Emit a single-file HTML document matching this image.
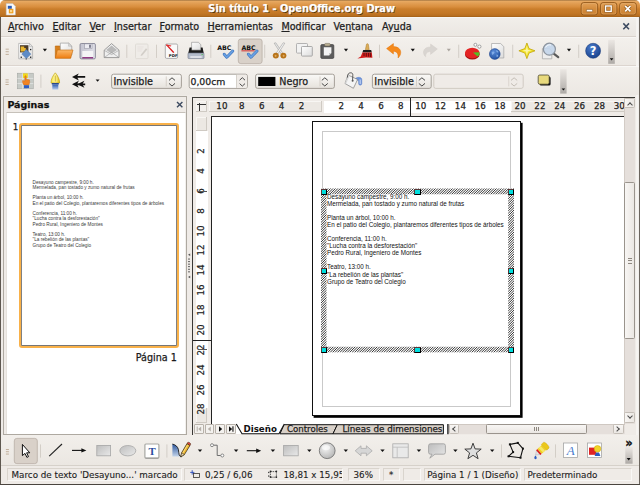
<!DOCTYPE html>
<html><head><meta charset="utf-8"><title>Sin título 1 - OpenOffice.org Draw</title>
<style>
*{box-sizing:border-box;margin:0;padding:0}
html,body{width:640px;height:486px;overflow:hidden;background:#fff}
body{position:relative;font-family:"DejaVu Sans","Liberation Sans",sans-serif;font-size:9.6px;color:#1a1a1a;line-height:1;-webkit-text-stroke-width:0.25px}
.a{position:absolute}
.t{position:absolute;white-space:nowrap;line-height:12px;height:12px}
u{text-decoration:underline;text-underline-offset:1px}
#title{left:0;top:0;width:640px;height:17px;background:linear-gradient(#8a6234 0px,#e9ab64 1px,#e29f55 3px,#d88d3c 7px,#ca7e2b 9px,#c47826 13px,#b66d1f 16px,#9c5c16 17px);border-radius:5px 5px 0 0}
#title .cap{left:0.7px;width:602px;top:2.8px;text-align:center;font-weight:bold;color:#fff;font-size:9.8px;text-shadow:0.8px 0.9px 0.6px #553408}
.wb{position:absolute;top:2.5px;width:16.5px;height:12.5px;border:1px solid #a9641b;border-radius:3px;background:linear-gradient(#e8aa66,#d28a3c);box-shadow:inset 0 0 0 1px rgba(255,220,170,.35)}
#menubar{left:1px;top:17px;width:635px;height:20px;background:linear-gradient(#fbfaf9 0,#f1eeea 1.5px,#ebe7e2 18px);border-bottom:1px solid #d9d2cc}
#menubar .t{top:4px;font-size:9.6px;color:#222}
#tb1{left:1px;top:37px;width:635px;height:29.1px;background:linear-gradient(#f3f0ec,#ece8e3);border-bottom:1px solid #dcd5cf;border-top:1px solid #f8f6f4}
#tb2{left:1px;top:66.1px;width:637.5px;height:29px;background:linear-gradient(#f3f0ec,#ece8e3);border-top:1px solid #f9f8f6}
.sep{position:absolute;width:1px;background:#cfcac2;box-shadow:1px 0 0 #fbfaf8}
.dd{position:absolute;width:0;height:0;border-left:2.5px solid transparent;border-right:2.5px solid transparent;border-top:3px solid #222}
.grip{position:absolute;width:3px;height:9px;background:repeating-linear-gradient(#b9b2a8 0,#b9b2a8 1px,transparent 1px,transparent 3px)}

#panel{left:3px;top:96px;width:184px;height:339px;border:1px solid #aea9a1;background:#efebe7}
#panel .hd{left:3.4px;top:2.4px;font-weight:bold;font-size:9.5px;color:#111}
#plist{left:2px;top:15.4px;width:180px;height:321.6px;background:#fff;border:1px solid #e6e2dd;border-top:1.3px solid #c6c1ba;border-bottom:none;border-right-color:#f2f0ed}
#thumb{left:19.2px;top:123.2px;width:160px;height:224.5px;border:2.4px solid #f9b149;border-radius:3px;background:#fff;box-shadow:inset 0 0 0 0.7px #4a4a4a}
.tt{position:absolute;left:32.5px;font-family:"Liberation Sans",sans-serif;font-size:4.7px;line-height:5.27px;white-space:nowrap;color:#3a3a3a;-webkit-text-stroke-width:0}
#view{left:192px;top:97px;width:443px;height:338px;background:#efebe7;border-left:1.5px solid #3a3835;border-top:1.5px solid #3a3835}
#canvas{left:210.7px;top:116.2px;width:414.3px;height:307.8px;background:#fff;border-left:1.5px solid #222;border-top:1.5px solid #222;overflow:hidden}
.rn{position:absolute;font-size:8.7px;line-height:12px;height:12px;width:20px;text-align:center;color:#222}
.vn{position:absolute;font-size:8.7px;line-height:12px;height:12px;width:20px;text-align:center;color:#222;transform:rotate(-90deg);transform-origin:center}
#page{left:312.2px;top:121.1px;width:209px;height:295.1px;background:#fff;border:1px solid #111;box-shadow:1.6px 1.8px 0 #000}
#margin{left:321.8px;top:131.3px;width:189.7px;height:275.9px;border:1px solid #c9c9c9}
.hatch{position:absolute;background:repeating-linear-gradient(135deg,#222 0,#222 0.8px,#fff 0.8px,#fff 2px)}
.h{position:absolute;width:6.3px;height:6.2px;margin:.15px 0 0 .15px;background:#00dede;border:0.9px solid;border-color:#5a3838 #000 #000 #5a3838}
.dt{position:absolute;left:327px;font-family:"Liberation Sans",sans-serif;font-size:6.3px;line-height:7.05px;white-space:nowrap;color:#111;-webkit-text-stroke-width:0}
.sbtn{position:absolute;background:linear-gradient(#f6f4f1,#e4e0da);border:1px solid #aaa59d;border-radius:2px}

.rg{position:absolute;background:#ece8e3;box-shadow:inset -1px -1px 0 #cfcac3,inset 1px 1px 0 #f8f6f3}
.rw{position:absolute;background:#fff}

#vsb{left:624px;top:98px;width:11px;height:326px;background:#e5dfdb;border-left:1px solid #d3ccc6}
#hsb{left:449px;top:424.2px;width:175.5px;height:10.2px;background:#e5dfdb;border-top:1px solid #cfc8c2}
.sb{position:absolute;border:1px solid #c4beb7;border-radius:1.5px;background:linear-gradient(90deg,#f8f6f4,#ebe7e3)}
.sbh{position:absolute;border:1px solid #c4beb7;border-radius:1.5px;background:linear-gradient(#f8f6f4,#ebe7e3)}
.chev{position:absolute;width:4px;height:4px;border-left:1.3px solid #4a4a4a;border-top:1.3px solid #4a4a4a}
#tabs{left:193.5px;top:424px;width:255px;height:10px;background:#efebe7}
.nb{position:absolute;top:424px;width:9.4px;height:9.6px;border-radius:1px;border:1px solid #b8b2aa;background:#f4f2ef}
#btb{left:1px;top:435px;width:638px;height:30.5px;background:linear-gradient(#f2efeb,#ebe7e2);border-bottom:1px solid #d6d1ca}
#status{left:1px;top:466px;width:638px;height:18px;background:#efebe7}
.sf{position:absolute;top:468.2px;height:12.9px;border:1px solid;border-color:#d9d4cd #f9f8f6 #f9f8f6 #d9d4cd;overflow:hidden}
.sf span{position:absolute;top:0.8px;left:3.5px;font-size:8.75px;line-height:10px;white-space:nowrap;color:#1c1c1c;-webkit-text-stroke-width:.12px}
#wl{left:0;top:17px;width:1.2px;height:468px;background:#5e5850}
#wr{left:638.6px;top:17px;width:1.4px;height:468px;background:#6b655e}
#wb{left:0;top:483.6px;width:640px;height:1.4px;background:#4a453f}
#wbb{left:0;top:485px;width:640px;height:1px;background:#fff}
text[fill="#1c1c1c"],text[fill="#222"]{stroke:#1c1c1c;stroke-width:.25px}
</style></head><body>
<div id="title" class="a"><div class="t cap">Sin título 1 - OpenOffice.org Draw</div>
<svg class="a" style="left:0;top:0" width="640" height="18" viewBox="0 0 640 18">
<defs><linearGradient id="gWb" x1="0" y1="0" x2="0" y2="1"><stop offset="0" stop-color="#e3a25a"/><stop offset="0.5" stop-color="#d48c3c"/><stop offset="1" stop-color="#c98032"/></linearGradient></defs>
<g stroke="#8e5516" stroke-width="0.9" fill="url(#gWb)"><rect x="581.2" y="2.6" width="16.4" height="12.3" rx="2.5"/><rect x="600.6" y="2.6" width="16.2" height="12.3" rx="2.5"/><rect x="619.7" y="2.6" width="16.6" height="12.3" rx="2.5"/></g>
<g stroke="#f0c088" stroke-opacity="0.5" stroke-width="0.7" fill="none"><rect x="582.1" y="3.5" width="14.6" height="10.5" rx="1.8"/><rect x="601.5" y="3.5" width="14.4" height="10.5" rx="1.8"/><rect x="620.6" y="3.5" width="14.8" height="10.5" rx="1.8"/></g>
<rect x="586.4" y="9.4" width="6.2" height="2.4" rx="0.6" fill="#fff" stroke="#7a4a14" stroke-width="0.5"/>
<rect x="605.6" y="6" width="5.6" height="5.4" fill="none" stroke="#7a4a14" stroke-width="2.3"/><rect x="605.6" y="6" width="5.6" height="5.4" fill="none" stroke="#fff" stroke-width="1.4"/>
<path d="M625.2 6L630.4 11.4M630.4 6L625.2 11.4" stroke="#7a4a14" stroke-width="2.8"/><path d="M625.2 6L630.4 11.4M630.4 6L625.2 11.4" stroke="#fff" stroke-width="1.8"/>
<path d="M6.2 3.6H12.8L15.4 6.2V15H6.2z" fill="#fafafa" stroke="#b8b8b8" stroke-width="0.5"/>
<rect x="7.8" y="5.8" width="4" height="3" fill="#2a5ab4"/>
<rect x="8.8" y="8.8" width="4.6" height="4.6" fill="#f0a020"/><rect x="10" y="10" width="2.2" height="2.2" fill="#fbd890"/>
</svg>
</div>
<div class="a" style="left:1px;top:17px;width:637.6px;height:467px;background:linear-gradient(90deg,#efebe7 0,#efebe7 634.5px,#f8f7f5 636px,#f1eeeb 637.6px)"></div>
<div id="menubar" class="a">
<span class="t" style="left:7px"><u>A</u>rchivo</span>
<span class="t" style="left:51.5px"><u>E</u>ditar</span>
<span class="t" style="left:88.5px"><u>V</u>er</span>
<span class="t" style="left:113px"><u>I</u>nsertar</span>
<span class="t" style="left:158.5px"><u>F</u>ormato</span>
<span class="t" style="left:206.5px"><u>H</u>erramientas</span>
<span class="t" style="left:280.4px"><u>M</u>odificar</span>
<span class="t" style="left:332.5px">Ve<u>n</u>tana</span>
<span class="t" style="left:381px">Ay<u>u</u>da</span>
</div>
<div id="tb1" class="a"></div>
<!--TB1S--><svg class="a" style="left:0;top:36px" width="640" height="30" viewBox="0 36 640 30">
<defs>
<linearGradient id="gOr" x1="0" y1="0" x2="0" y2="1"><stop offset="0" stop-color="#fbb868"/><stop offset="1" stop-color="#ee7d10"/></linearGradient>
<linearGradient id="gPg" x1="0" y1="0" x2="1" y2="1"><stop offset="0" stop-color="#ffffff"/><stop offset="1" stop-color="#dcdcdc"/></linearGradient>
<linearGradient id="gHd" x1="0" y1="0" x2="0" y2="1"><stop offset="0" stop-color="#ebe7e3"/><stop offset="1" stop-color="#aeaaa6"/></linearGradient>
<radialGradient id="gHelp" cx="0.4" cy="0.3" r="0.8"><stop offset="0" stop-color="#4a7ccc"/><stop offset="1" stop-color="#143c86"/></radialGradient>
<radialGradient id="gGlobe" cx="0.4" cy="0.3" r="0.8"><stop offset="0" stop-color="#5a8cd8"/><stop offset="1" stop-color="#1c4c9c"/></radialGradient>
<linearGradient id="gFl" x1="0" y1="0" x2="1" y2="0"><stop offset="0" stop-color="#c4c4d0"/><stop offset="1" stop-color="#dedee6"/></linearGradient>
</defs>
<!-- grip -->
<g fill="#bcaa94"><rect x="5.6" y="48.7" width="3.2" height="0.9"/><rect x="5.6" y="51.3" width="3.2" height="0.9"/><rect x="5.6" y="53.9" width="3.2" height="0.9"/></g>
<!-- new drawing -->
<path d="M18.7 43.4H29.5L32.6 46.6V58.8H18.7z" fill="url(#gPg)" stroke="#a9a9a9" stroke-width="0.7"/>
<path d="M29.5 43.4V46.6H32.6z" fill="#e8e8e8" stroke="#a9a9a9" stroke-width="0.5"/>
<rect x="20" y="45.2" width="8.4" height="7.2" fill="#4a3a28"/>
<path d="M20.6 46.6h3.6v1.4h1.6v3.4h-5.2z" fill="#e9b62e"/>
<path d="M26.3 49.6L30.8 54.1L26.3 58.6L21.8 54.1z" fill="#5f8cc6" stroke="#4a74ac" stroke-width="0.5"/>
<g fill="#222"><rect x="20.6" y="56.6" width="1.3" height="1.3"/><rect x="30" y="56.6" width="1.3" height="1.3"/><rect x="30" y="48.9" width="1.3" height="1.3"/><rect x="25.6" y="58.6" width="1.3" height="0.8"/></g>
<path d="M42.8 48.7h4.2l-2.1 2.8z" fill="#111"/>
<!-- open -->
<path d="M55.3 46H59.8L60.8 47.4H70.6V57.8H55.3z" fill="#d8801c" stroke="#b8640c" stroke-width="0.6"/>
<path d="M60.3 43.1H68.6L71.8 46.2V55H60.3z" fill="url(#gPg)" stroke="#9a9a9a" stroke-width="0.7"/>
<path d="M68.6 43.1V46.2H71.8z" fill="#dedede" stroke="#9a9a9a" stroke-width="0.4"/>
<path d="M57.4 50H73L70.6 58.3H55.3z" fill="url(#gOr)" stroke="#c86c0c" stroke-width="0.6"/>
<!-- save -->
<rect x="80" y="43.5" width="15.4" height="15.4" rx="1.3" fill="url(#gFl)" stroke="#6c6c80" stroke-width="0.7"/>
<rect x="84.6" y="43.9" width="7.4" height="4.8" fill="#ececf2" stroke="#8a8a98" stroke-width="0.5"/>
<rect x="89.3" y="44.7" width="1.4" height="3.1" fill="#55556a"/>
<rect x="82.3" y="51" width="10.8" height="6.3" fill="#f4f4f6"/>
<rect x="82.3" y="57.1" width="10.8" height="1.3" fill="#8a2c7c"/>
<!-- mail -->
<path d="M104.2 50.2L111.6 43.6L119 50.2V57.6H104.2z" fill="#efefef" stroke="#858585" stroke-width="0.8"/>
<path d="M106.2 50L111.6 45.6L117 50L111.6 53.6z" fill="#b9b9b9"/>
<path d="M104.4 57.4L111.6 52.4L118.8 57.4M104.4 50.4L111.6 54.6L118.8 50.4" fill="none" stroke="#9a9a9a" stroke-width="0.6"/>
<!-- seps -->
<g fill="#d3cec7"><rect x="126.3" y="44.7" width="1" height="13.2"/><rect x="156" y="44.7" width="1" height="13.2"/><rect x="210.3" y="44.7" width="1" height="13.2"/><rect x="264.2" y="44.7" width="1" height="13.2"/><rect x="379" y="44.7" width="1" height="13.2"/><rect x="458.2" y="44.7" width="1" height="13.2"/><rect x="512.2" y="44.7" width="1" height="13.2"/><rect x="578.2" y="44.7" width="1" height="13.2"/></g>
<!-- edit doc disabled -->
<rect x="135.5" y="44" width="12.5" height="14.6" rx="1" fill="#efece8" stroke="#dcd8d2" stroke-width="0.8"/>
<path d="M141 54.5L146 48.3L147.3 49.4L142.3 55.5L140.6 56z" fill="#d2cec8"/>
<g stroke="#e0dcd6" stroke-width="0.6"><path d="M137.5 47h6M137.5 49h5M137.5 51h4"/></g>
<!-- pdf -->
<rect x="165.3" y="44" width="12.3" height="14.4" rx="1.4" fill="#fafafa" stroke="#9c9c9c" stroke-width="0.8"/>
<path d="M165.9 45L167 44.6L174.4 52.2L173.2 53z" fill="#d81818"/>
<path d="M166 45.6L166.4 44.4L171.4 45.4L170.8 46.4z" fill="#e03030"/>
<text x="168.8" y="57.3" font-family="DejaVu Sans,sans-serif" font-weight="bold" font-size="3.9" fill="#111">PDF</text>
<!-- printer -->
<path d="M191.6 42.3H198.4L200.8 44.6V50H191.6z" fill="url(#gPg)" stroke="#8c8c8c" stroke-width="0.6"/>
<path d="M189.6 47.6H191.6V50.2H200.8V47.6H202.6L203.8 53.6H188.2z" fill="#1c1c1c"/>
<rect x="188" y="53" width="16" height="5.6" rx="0.8" fill="#b4bccb" stroke="#6c7486" stroke-width="0.6"/>
<rect x="190.3" y="56.2" width="11.4" height="1.6" fill="#e6e8ee"/>
<rect x="201.6" y="54" width="1.1" height="1.1" fill="#4ac04a"/>
<!-- ABC 1 -->
<text x="217.2" y="49.6" font-family="DejaVu Sans,sans-serif" font-weight="bold" font-size="6.3" fill="#111">ABC</text>
<path d="M224.2 54.2L226.8 57.2L232.8 51" fill="none" stroke="#3f74bc" stroke-width="2.9" stroke-linecap="round" stroke-linejoin="round"/>
<path d="M224.2 54.2L226.8 57.2L232.8 51" fill="none" stroke="#6aa2e4" stroke-width="1.7" stroke-linecap="round" stroke-linejoin="round"/>
<!-- pressed btn -->
<rect x="238.3" y="39" width="23.8" height="24.6" rx="2.5" fill="#d9d1c9" stroke="#b9afa6" stroke-width="0.8"/>
<text x="241.4" y="49.6" font-family="DejaVu Sans,sans-serif" font-weight="bold" font-size="6.3" fill="#111">ABC</text>
<rect x="241.4" y="50.4" width="13.2" height="0.9" fill="#d42020"/>
<path d="M248.4 54.2L251 57.2L257 51" fill="none" stroke="#3f74bc" stroke-width="2.9" stroke-linecap="round" stroke-linejoin="round"/>
<path d="M248.4 54.2L251 57.2L257 51" fill="none" stroke="#6aa2e4" stroke-width="1.7" stroke-linecap="round" stroke-linejoin="round"/>
<!-- scissors -->
<path d="M274.2 43.2L275.8 42.8L283.4 54L281.8 55z" fill="#e9e9e9" stroke="#8e8e8e" stroke-width="0.5"/>
<path d="M284.8 43.2L283.2 42.8L275.6 54L277.2 55z" fill="#f4f4f4" stroke="#8e8e8e" stroke-width="0.5"/>
<ellipse cx="275.8" cy="55.6" rx="3" ry="2.9" fill="#b8741a"/><ellipse cx="283.4" cy="55.6" rx="3" ry="2.9" fill="#b8741a"/>
<ellipse cx="275.6" cy="55.8" rx="1" ry="1.1" fill="#dcaa62"/><ellipse cx="283.6" cy="55.8" rx="1" ry="1.1" fill="#dcaa62"/>
<!-- copy -->
<rect x="296.5" y="43.5" width="11" height="9.6" rx="0.8" fill="#f2f2f2" stroke="#a2a2a2" stroke-width="0.8"/>
<rect x="301.5" y="46.5" width="10.8" height="9.6" rx="0.8" fill="url(#gPg)" stroke="#989898" stroke-width="0.8"/>
<!-- paste -->
<rect x="320.8" y="44.6" width="13" height="13.8" rx="1.2" fill="#5c5c5c" stroke="#3e3e3e" stroke-width="0.7"/>
<rect x="324.6" y="43.4" width="5.6" height="2.6" rx="1" fill="#b9ae92" stroke="#6c6450" stroke-width="0.5"/>
<path d="M323.8 47.2H331.4V53L329 55.4H323.8z" fill="#f4f4f4"/>
<path d="M331.4 53H329V55.4z" fill="#c9c9c9"/>
<path d="M343.9 48.7h4.2l-2.1 2.8z" fill="#111"/>
<!-- brush -->
<path d="M366.4 44.6C366.4 43.4 368.4 43.4 368.4 44.6L369.2 49.8H365.4z" fill="#dcae58" stroke="#a8782c" stroke-width="0.5"/>
<path d="M363.2 50H371.2L371.8 52.4H362.4z" fill="#1c1c1c"/>
<path d="M362.4 52.4H371.8L372.4 57.8L366 57.4L357.4 58.6L360.8 56.6z" fill="#d21c1c"/>
<path d="M364 53v3M366.3 53v3.6M368.6 53v3.6M370.6 53v4" stroke="#4c0c0c" stroke-width="0.8"/>
<!-- undo -->
<path d="M386.6 48.6L393.4 43.6V46.6C398.6 46.6 401.4 50 400.6 53.6C400.2 55.6 399.2 57 398 58C398.6 54.6 397.4 51.4 393.4 51.2V54z" fill="#f58a1c" stroke="#e07206" stroke-width="0.5" stroke-linejoin="round"/>
<path d="M410.7 48.7h4.2l-2.1 2.8z" fill="#111"/>
<!-- redo disabled -->
<path d="M437.4 49L430.6 44V47C425.4 47 423 50 423.6 53.2C424 55 424.6 56 425.6 56.8C425.6 53.8 426.8 51.6 430.6 51.6V54.4z" fill="#d9d5d1" stroke="#cfcbc6" stroke-width="0.4" stroke-linejoin="round"/>
<path d="M446.8 48.8h4l-2 2.8z" fill="#aba59f"/>
<!-- chart -->
<ellipse cx="472.3" cy="54.4" rx="7.3" ry="5.2" fill="#a81010"/>
<ellipse cx="472.3" cy="53" rx="7.3" ry="5.2" fill="#e42424"/>
<path d="M473 52.6L479.4 52.2C479.8 53.8 479.2 55.4 477.6 56.6z" fill="#52c024"/>
<circle cx="475.4" cy="44.8" r="1.5" fill="#fff" stroke="#8a8a8a" stroke-width="0.8"/>
<circle cx="479.4" cy="46.6" r="1.6" fill="#fff" stroke="#8a8a8a" stroke-width="0.8"/>
<!-- hyperlink -->
<path d="M491.6 43.5H500.6L503.8 46.6V58H491.6z" fill="url(#gPg)" stroke="#a4a4a4" stroke-width="0.7"/>
<circle cx="494.8" cy="54" r="5.4" fill="url(#gGlobe)" stroke="#1a3f86" stroke-width="0.5"/>
<path d="M491.6 52.4C492.6 51.2 493.8 51.4 494.6 52.4C494.2 53.6 493 54.4 492.2 55zM495.8 50.4C497 50.2 498.2 51.2 498.6 52.2L497 52.6zM496.4 54.6C497.4 54.4 498.4 55.2 498.2 56.4L496.6 57z" fill="#8ab4ec" opacity="0.85"/>
<!-- star -->
<path d="M526.9 43L529 48.6L535 50.8L529 53L526.9 58.6L524.8 53L518.9 50.8L524.8 48.6z" fill="#f3e32a" stroke="#c2a60a" stroke-width="0.8" stroke-linejoin="round"/>
<path d="M526.9 45.6L527.8 49.8L531.6 50.8L527.8 51.6L526.9 55.6L526 51.6L522.4 50.8L526 49.8z" fill="#fbf6a8"/>
<!-- magnifier -->
<path d="M542.4 48.6H549.4L551.8 51V58.8H542.4z" fill="#eeeeee" stroke="#a2a2a2" stroke-width="0.7"/>
<path d="M553.4 53.4L558.2 57.2" stroke="#5a5a5a" stroke-width="2.2" stroke-linecap="round"/>
<circle cx="549.4" cy="49.2" r="6" fill="#c4d6ea" fill-opacity="0.92" stroke="#8c949e" stroke-width="1.2"/>
<path d="M545.6 47.4C546.6 45.2 549 44.4 551 45" fill="none" stroke="#fff" stroke-width="1" opacity="0.8"/>
<path d="M566.9 48.7h4.2l-2.1 2.8z" fill="#111"/>
<!-- help -->
<circle cx="593.1" cy="50.8" r="7.5" fill="url(#gHelp)" stroke="#123474" stroke-width="0.5"/>
<text x="593.1" y="55" text-anchor="middle" font-family="DejaVu Sans,sans-serif" font-weight="bold" font-size="11.5" fill="#fff">?</text>
<!-- overflow handle -->
<rect x="608.2" y="39.8" width="6.6" height="24" fill="url(#gHd)"/>
<path d="M609.8 58.2h3.6l-1.8 2.2z" fill="#111"/>
</svg>
<!--TB1E-->
<div id="tb2" class="a"></div>
<!--TB2S--><svg class="a" style="left:0;top:66px" width="640" height="30" viewBox="0 66 640 30">
<defs>
<linearGradient id="gCb" x1="0" y1="0" x2="0" y2="1"><stop offset="0" stop-color="#faf9f7"/><stop offset="1" stop-color="#e6e2dc"/></linearGradient>
<linearGradient id="gNib" x1="0" y1="0" x2="1" y2="0"><stop offset="0" stop-color="#f6e648"/><stop offset="0.5" stop-color="#fff6a0"/><stop offset="1" stop-color="#e0c010"/></linearGradient>
<linearGradient id="gHold" x1="0" y1="0" x2="0" y2="1"><stop offset="0" stop-color="#2c5cb0"/><stop offset="1" stop-color="#b8ccec"/></linearGradient>
</defs>
<g fill="#bcaa94"><rect x="5.5" y="79.4" width="3.2" height="0.9"/><rect x="5.5" y="81.7" width="3.2" height="0.9"/><rect x="5.5" y="84" width="3.2" height="0.9"/></g>
<!-- grid icon -->
<rect x="17.3" y="73.2" width="16" height="15.6" fill="#c6cac6" stroke="#9ea29e" stroke-width="0.5"/>
<g stroke="#e9ebe9" stroke-width="0.7"><path d="M22.6 73.2v15.6M28 73.2v15.6M17.3 78.4h16M17.3 83.6h16"/></g>
<rect x="23" y="73.4" width="4.8" height="4.6" fill="#f2d81c"/>
<path d="M24.8 76.4C24.8 75.4 26.2 75.4 26.2 76.4V79.2L29.4 79.8C30 81.6 29.6 84 28.6 85H24C22.8 83.8 22.2 82 22.6 80.4L24.8 81z" fill="#f08424" stroke="#c8600c" stroke-width="0.4"/>
<rect x="24" y="85.2" width="5" height="3" fill="#2e5cc0"/>
<rect x="40.4" y="74.6" width="1" height="13.2" fill="#d3cec7"/>
<!-- pen -->
<path d="M55.3 72.8C57.4 75.2 59.8 79.4 59.6 83H51C50.8 79.4 53.2 75.2 55.3 72.8z" fill="url(#gNib)" stroke="#b89a08" stroke-width="0.6"/>
<path d="M55.3 75.6V81.6" stroke="#a88c08" stroke-width="0.6"/>
<rect x="51.8" y="83" width="7" height="1.5" fill="#28488c"/>
<path d="M52.3 84.5H58.3V89.6H52.3z" fill="url(#gHold)"/>
<!-- arrows -->
<g fill="#111"><path d="M72 76.9L78.8 73.4L77.4 76H85.2V77.8H77.4L78.8 80.4z"/><path d="M72 84.3L78.8 80.8L77.4 83.4H85.2V85.2H77.4L78.8 87.8z"/><path d="M77.2 84.3L84.4 80.8L82.4 84.3L84.4 87.8z"/></g>
<path d="M95.6 79.5h4l-2 2.3z" fill="#111"/>
<!-- combo 1 -->
<rect x="111.6" y="74.2" width="69.8" height="14.2" rx="2" fill="url(#gCb)" stroke="#9c968e" stroke-width="0.9"/>
<rect x="165.8" y="76.4" width="0.8" height="10" fill="#cfc9c1"/>
<g fill="none" stroke="#484848" stroke-width="1"><path d="M169 80.4L172 77.8L175 80.4M169 83.4L172 86L175 83.4"/></g>
<text x="113.4" y="84.7" font-family="DejaVu Sans,sans-serif" font-size="9.6" fill="#1c1c1c">Invisible</text>
<!-- spin -->
<rect x="189.2" y="74.2" width="58.2" height="14.2" rx="2" fill="#fff" stroke="#9c968e" stroke-width="0.9"/>
<path d="M236.6 74.7H245.4Q246.9 74.7 246.9 76.2V86.4Q246.9 87.9 245.4 87.9H236.6z" fill="#efebe7"/>
<rect x="236.2" y="74.7" width="0.7" height="13.2" fill="#c6c0b8"/>
<g fill="none" stroke="#484848" stroke-width="1"><path d="M239.6 80.2L242.3 77.7L245 80.2M239.6 83.6L242.3 86.1L245 83.6"/></g>
<text x="190.5" y="84.7" font-family="DejaVu Sans,sans-serif" font-size="9.3" fill="#1c1c1c">0,00cm</text>
<!-- color combo -->
<rect x="255.6" y="74.2" width="78.8" height="14.2" rx="2" fill="url(#gCb)" stroke="#9c968e" stroke-width="0.9"/>
<rect x="258.2" y="76.9" width="17.2" height="9.1" fill="#000"/>
<text x="279.3" y="84.7" font-family="DejaVu Sans,sans-serif" font-size="9.6" fill="#1c1c1c">Negro</text>
<rect x="319.6" y="76.4" width="0.8" height="10" fill="#cfc9c1"/>
<g fill="none" stroke="#484848" stroke-width="1"><path d="M321.8 80.4L324.8 77.8L327.8 80.4M321.8 83.4L324.8 86L327.8 83.4"/></g>
<!-- bucket -->
<path d="M355.6 78.2C358 76.8 361.8 77 361.8 79.6V83.8C361.8 85.6 358.6 85.6 358.6 83.8V80.8C358 80 357 80 356.2 80.4z" fill="#6c92da" stroke="#4a72c0" stroke-width="0.4"/>
<path d="M359.6 79.4C360.4 79.2 360.8 79.6 360.8 80.4V83.6C360.8 84.4 359.6 84.4 359.6 83.6z" fill="#c0d2f2"/>
<path d="M348 75L357.6 79.5L353.4 88.3L345 83.5z" fill="#f4f4f4" stroke="#7c7c7c" stroke-width="0.7" stroke-linejoin="round"/>
<path d="M348 75L349.6 75.8L346.2 83.6L345 83.5z" fill="#d6d6d6"/>
<path d="M347.4 77.6C347.2 74.6 348.6 72.8 350.6 72.8C352.4 72.8 352.9 73.8 352.8 75.4L352.6 80.4" fill="none" stroke="#484848" stroke-width="0.9"/>
<circle cx="352.6" cy="80.8" r="1" fill="#555"/>
<!-- combo 3 -->
<rect x="372.4" y="74.2" width="58.8" height="14.2" rx="2" fill="url(#gCb)" stroke="#9c968e" stroke-width="0.9"/>
<text x="374.3" y="84.7" font-family="DejaVu Sans,sans-serif" font-size="9.6" fill="#1c1c1c">Invisible</text>
<rect x="416" y="76.4" width="0.8" height="10" fill="#cfc9c1"/>
<g fill="none" stroke="#484848" stroke-width="1"><path d="M418.8 80.4L421.9 77.8L425 80.4M418.8 83.4L421.9 86L425 83.4"/></g>
<!-- disabled combo -->
<rect x="433.8" y="74.2" width="89.4" height="14.2" rx="2" fill="#efebe7" stroke="#cdc7bf" stroke-width="0.9"/>
<rect x="508.4" y="76.4" width="0.8" height="10" fill="#d6d0c8"/>
<g fill="none" stroke="#c4beb6" stroke-width="1"><path d="M511 80.4L514.1 77.8L517.2 80.4M511 83.4L514.1 86L517.2 83.4"/></g>
<!-- shadow icon -->
<rect x="539.6" y="76.4" width="11" height="9.2" rx="1.6" fill="#111"/>
<rect x="538.2" y="75" width="11" height="9.2" rx="1.6" fill="#e8d97c" stroke="#4a4632" stroke-width="0.8"/>
<!-- overflow -->
<rect x="560.2" y="69.2" width="6.4" height="24.4" fill="url(#gHd)"/>
<path d="M561.6 88.4h3.6l-1.8 2.2z" fill="#111"/>
</svg>
<!--TB2E-->

<div id="panel" class="a"><span class="t hd">Páginas</span><div id="plist" class="a"></div></div>
<div class="t" style="left:12.8px;top:120.8px;font-size:8.8px">1</div>
<div id="thumb" class="a"></div>
<div class="tt" style="top:179.5px">Desayuno campestre, 9:00 h.<br>Mermelada, pan tostado y zumo natural de frutas<br><br>Planta un árbol, 10:00 h.<br>En el patio del Colegio, plantaremos diferentes tipos de árboles<br><br>Conferencia, 11:00 h.<br>"Lucha contra la desforestación"<br>Pedro Rural, Ingeniero de Montes<br><br>Teatro, 13:00 h.<br>"La rebelión de las plantas"<br>Grupo de Teatro del Colegio</div>
<div class="t" style="left:135.7px;top:352.3px;font-size:9.6px">Página 1</div>
<svg class="a" style="left:170px;top:98px" width="470" height="14" viewBox="170 98 470 14"><path d="M177 102L182.4 107.2M182.4 102L177 107.2" stroke="#3c4a60" stroke-width="1.4"/></svg>
<svg class="a" style="left:616px;top:20px" width="20" height="14" viewBox="616 20 20 14"><path d="M623.3 23.4L629 29.2M629 23.4L623.3 29.2" stroke="#3c4a60" stroke-width="1.5"/></svg>
<svg class="a" style="left:186px;top:250px" width="8" height="32" viewBox="186 250 8 32"><g fill="#555"><path d="M190.2 253.4V256L188 254.7z"/><path d="M190.2 275.7V278.3L188 277z"/><rect x="188" y="258.6" width="2" height="0.9"/><rect x="188" y="261.2" width="2" height="0.9"/><rect x="188" y="263.7" width="2" height="0.9"/><rect x="188" y="266.2" width="2" height="0.9"/><rect x="188" y="268.8" width="2" height="0.9"/><rect x="188" y="271.4" width="2" height="0.9"/></g></svg>
<div id="view" class="a"></div>
<div id="canvas" class="a"></div>
<div id="page" class="a"></div>
<div id="margin" class="a"></div>
<svg class="a" style="left:316px;top:184px" width="204" height="174" viewBox="316 184 204 174">
<defs><clipPath id="ring"><path clip-rule="evenodd" d="M321.0 188.3H514.0V352.6H321.0zM326.5 194.2H508.2V346.8H326.5z"/></clipPath></defs>
<g clip-path="url(#ring)"><rect x="316" y="184" width="204" height="174" fill="#fff"/><path d="M156.70 352.60L321.00 188.30M159.14 352.60L323.44 188.30M161.58 352.60L325.88 188.30M164.02 352.60L328.32 188.30M166.46 352.60L330.76 188.30M168.90 352.60L333.20 188.30M171.34 352.60L335.64 188.30M173.78 352.60L338.08 188.30M176.22 352.60L340.52 188.30M178.66 352.60L342.96 188.30M181.10 352.60L345.40 188.30M183.54 352.60L347.84 188.30M185.98 352.60L350.28 188.30M188.42 352.60L352.72 188.30M190.86 352.60L355.16 188.30M193.30 352.60L357.60 188.30M195.74 352.60L360.04 188.30M198.18 352.60L362.48 188.30M200.62 352.60L364.92 188.30M203.06 352.60L367.36 188.30M205.50 352.60L369.80 188.30M207.94 352.60L372.24 188.30M210.38 352.60L374.68 188.30M212.82 352.60L377.12 188.30M215.26 352.60L379.56 188.30M217.70 352.60L382.00 188.30M220.14 352.60L384.44 188.30M222.58 352.60L386.88 188.30M225.02 352.60L389.32 188.30M227.46 352.60L391.76 188.30M229.90 352.60L394.20 188.30M232.34 352.60L396.64 188.30M234.78 352.60L399.08 188.30M237.22 352.60L401.52 188.30M239.66 352.60L403.96 188.30M242.10 352.60L406.40 188.30M244.54 352.60L408.84 188.30M246.98 352.60L411.28 188.30M249.42 352.60L413.72 188.30M251.86 352.60L416.16 188.30M254.30 352.60L418.60 188.30M256.74 352.60L421.04 188.30M259.18 352.60L423.48 188.30M261.62 352.60L425.92 188.30M264.06 352.60L428.36 188.30M266.50 352.60L430.80 188.30M268.94 352.60L433.24 188.30M271.38 352.60L435.68 188.30M273.82 352.60L438.12 188.30M276.26 352.60L440.56 188.30M278.70 352.60L443.00 188.30M281.14 352.60L445.44 188.30M283.58 352.60L447.88 188.30M286.02 352.60L450.32 188.30M288.46 352.60L452.76 188.30M290.90 352.60L455.20 188.30M293.34 352.60L457.64 188.30M295.78 352.60L460.08 188.30M298.22 352.60L462.52 188.30M300.66 352.60L464.96 188.30M303.10 352.60L467.40 188.30M305.54 352.60L469.84 188.30M307.98 352.60L472.28 188.30M310.42 352.60L474.72 188.30M312.86 352.60L477.16 188.30M315.30 352.60L479.60 188.30M317.74 352.60L482.04 188.30M320.18 352.60L484.48 188.30M322.62 352.60L486.92 188.30M325.06 352.60L489.36 188.30M327.50 352.60L491.80 188.30M329.94 352.60L494.24 188.30M332.38 352.60L496.68 188.30M334.82 352.60L499.12 188.30M337.26 352.60L501.56 188.30M339.70 352.60L504.00 188.30M342.14 352.60L506.44 188.30M344.58 352.60L508.88 188.30M347.02 352.60L511.32 188.30M349.46 352.60L513.76 188.30M351.90 352.60L516.20 188.30M354.34 352.60L518.64 188.30M356.78 352.60L521.08 188.30M359.22 352.60L523.52 188.30M361.66 352.60L525.96 188.30M364.10 352.60L528.40 188.30M366.54 352.60L530.84 188.30M368.98 352.60L533.28 188.30M371.42 352.60L535.72 188.30M373.86 352.60L538.16 188.30M376.30 352.60L540.60 188.30M378.74 352.60L543.04 188.30M381.18 352.60L545.48 188.30M383.62 352.60L547.92 188.30M386.06 352.60L550.36 188.30M388.50 352.60L552.80 188.30M390.94 352.60L555.24 188.30M393.38 352.60L557.68 188.30M395.82 352.60L560.12 188.30M398.26 352.60L562.56 188.30M400.70 352.60L565.00 188.30M403.14 352.60L567.44 188.30M405.58 352.60L569.88 188.30M408.02 352.60L572.32 188.30M410.46 352.60L574.76 188.30M412.90 352.60L577.20 188.30M415.34 352.60L579.64 188.30M417.78 352.60L582.08 188.30M420.22 352.60L584.52 188.30M422.66 352.60L586.96 188.30M425.10 352.60L589.40 188.30M427.54 352.60L591.84 188.30M429.98 352.60L594.28 188.30M432.42 352.60L596.72 188.30M434.86 352.60L599.16 188.30M437.30 352.60L601.60 188.30M439.74 352.60L604.04 188.30M442.18 352.60L606.48 188.30M444.62 352.60L608.92 188.30M447.06 352.60L611.36 188.30M449.50 352.60L613.80 188.30M451.94 352.60L616.24 188.30M454.38 352.60L618.68 188.30M456.82 352.60L621.12 188.30M459.26 352.60L623.56 188.30M461.70 352.60L626.00 188.30M464.14 352.60L628.44 188.30M466.58 352.60L630.88 188.30M469.02 352.60L633.32 188.30M471.46 352.60L635.76 188.30M473.90 352.60L638.20 188.30M476.34 352.60L640.64 188.30M478.78 352.60L643.08 188.30M481.22 352.60L645.52 188.30M483.66 352.60L647.96 188.30M486.10 352.60L650.40 188.30M488.54 352.60L652.84 188.30M490.98 352.60L655.28 188.30M493.42 352.60L657.72 188.30M495.86 352.60L660.16 188.30M498.30 352.60L662.60 188.30M500.74 352.60L665.04 188.30M503.18 352.60L667.48 188.30M505.62 352.60L669.92 188.30M508.06 352.60L672.36 188.30M510.50 352.60L674.80 188.30M512.94 352.60L677.24 188.30" stroke="#000" stroke-width="0.8" fill="none"/></g>
</svg>
<div class="dt" style="top:193px">Desayuno campestre, 9:00 h.<br>Mermelada, pan tostado y zumo natural de frutas<br><br>Planta un árbol, 10:00 h.<br>En el patio del Colegio, plantaremos diferentes tipos de árboles<br><br>Conferencia, 11:00 h.<br>"Lucha contra la desforestación"<br>Pedro Rural, Ingeniero de Montes<br><br>Teatro, 13:00 h.<br>"La rebelión de las plantas"<br>Grupo de Teatro del Colegio</div>
<div class="h" style="left:321.0px;top:188.6px"></div>
<div class="h" style="left:414.2px;top:188.6px"></div>
<div class="h" style="left:507.7px;top:188.6px"></div>
<div class="h" style="left:321.0px;top:267.4px"></div>
<div class="h" style="left:507.7px;top:267.4px"></div>
<div class="h" style="left:321.0px;top:346.4px"></div>
<div class="h" style="left:414.2px;top:346.4px"></div>
<div class="h" style="left:507.7px;top:346.4px"></div>

<div class="rg" style="left:195.5px;top:100.5px;width:11.5px;height:11.5px;background:#f2efec"></div>
<div class="a" style="left:199.3px;top:102.5px;width:1.2px;height:8px;background:#333"></div>
<div class="a" style="left:197px;top:104.3px;width:9px;height:1.2px;background:#333"></div>
<div class="rg" style="left:208.5px;top:100.5px;width:113px;height:11.5px"></div>
<div class="rw" style="left:324px;top:100.5px;width:186.5px;height:12px"></div>
<div class="rg" style="left:511px;top:100.5px;width:113.5px;height:11.5px"></div>
<div class="rg" style="left:195.5px;top:117px;width:11.5px;height:14px"></div>
<div class="rw" style="left:195.5px;top:131px;width:12px;height:276.5px"></div>
<div class="rg" style="left:195.5px;top:407.5px;width:11.5px;height:15px"></div>


<div class="rn" style="left:211.9px;top:100px">10</div><div class="rn" style="left:231.8px;top:100px">8</div><div class="rn" style="left:251.7px;top:100px">6</div><div class="rn" style="left:271.6px;top:100px">4</div><div class="rn" style="left:291.4px;top:100px">2</div><div class="rn" style="left:331.2px;top:100px">2</div><div class="rn" style="left:351.0px;top:100px">4</div><div class="rn" style="left:370.9px;top:100px">6</div><div class="rn" style="left:390.8px;top:100px">8</div><div class="rn" style="left:410.7px;top:100px">10</div><div class="rn" style="left:430.5px;top:100px">12</div><div class="rn" style="left:450.4px;top:100px">14</div><div class="rn" style="left:470.3px;top:100px">16</div><div class="rn" style="left:490.1px;top:100px">18</div><div class="rn" style="left:510.0px;top:100px">20</div><div class="rn" style="left:529.9px;top:100px">22</div><div class="rn" style="left:549.7px;top:100px">24</div><div class="rn" style="left:569.6px;top:100px">26</div><div class="rn" style="left:589.5px;top:100px">28</div><div class="rn" style="left:613.8px;top:100px;width:10.5px;overflow:hidden;text-align:left">30</div>
<div class="vn" style="left:191.4px;top:145.1px">2</div><div class="vn" style="left:191.4px;top:164.9px">4</div><div class="vn" style="left:191.4px;top:184.8px">6</div><div class="vn" style="left:191.4px;top:204.7px">8</div><div class="vn" style="left:191.4px;top:224.6px">10</div><div class="vn" style="left:191.4px;top:244.4px">12</div><div class="vn" style="left:191.4px;top:264.3px">14</div><div class="vn" style="left:191.4px;top:284.2px">16</div><div class="vn" style="left:191.4px;top:304.0px">18</div><div class="vn" style="left:191.4px;top:323.9px">20</div><div class="vn" style="left:191.4px;top:343.8px">22</div><div class="vn" style="left:191.4px;top:363.6px">24</div><div class="vn" style="left:191.4px;top:383.5px">26</div><div class="vn" style="left:191.4px;top:403.4px">28</div>
<div class="a" style="left:410.2px;top:98px;width:1.2px;height:18px;background:#222"></div>
<div class="a" style="left:193px;top:339.7px;width:18px;height:1.2px;background:#222"></div>
<div class="a" style="left:198px;top:190.6px;width:9px;height:1px;background:#555"></div>
<div class="a" style="left:198px;top:348.8px;width:9px;height:1px;background:#555"></div>

<div id="vsb" class="a"></div>
<div class="sb" style="left:624.3px;top:98.3px;width:10.5px;height:10px"></div>
<div class="chev" style="left:627.6px;top:102.6px;transform:rotate(45deg)"></div>
<div class="sb" style="left:624.3px;top:182.3px;width:10.5px;height:157px;border-color:#9a948d"></div>
<div class="a" style="left:627.5px;top:257.6px;width:4px;height:6px;background:repeating-linear-gradient(#8d877f 0,#8d877f 1px,transparent 1px,transparent 2.45px)"></div>
<div class="sb" style="left:624.3px;top:412px;width:10.5px;height:10.5px"></div>
<div class="chev" style="left:627.6px;top:413.8px;transform:rotate(225deg)"></div>
<div id="tabs" class="a"></div>
<div id="hsb" class="a"></div>
<div class="nb" style="left:194.4px"></div><div class="nb" style="left:204.6px"></div><div class="nb" style="left:215.4px"></div><div class="nb" style="left:226.2px"></div>
<svg class="a" style="left:190px;top:420px" width="270" height="18" viewBox="190 420 270 18">
<g fill="#b5afa8"><rect x="196.7" y="426.5" width="1" height="5"/><path d="M201.2 426.5v5l-3-2.5z"/><path d="M210.8 426.5v5l-3-2.5z"/></g>
<g fill="#111"><path d="M219 426.3v5.4l3.2-2.7z"/><path d="M229 426.3v5.4l3.2-2.7z"/><rect x="232.4" y="426.3" width="1.1" height="5.4"/></g>
<rect x="236" y="424" width="212" height="10" fill="#fff"/>
<path d="M284 424.7H337.3L333 433.8H280z" fill="#d8d0c8" stroke="#111" stroke-width="1"/>
<path d="M337.3 424.7H443.4V433.8H333z" fill="#d8d0c8" stroke="#111" stroke-width="1"/>
<path d="M236.3 424L242 433.8H279L284.3 424" fill="#fff" stroke="#111" stroke-width="1.1"/>
<rect x="447.2" y="424" width="1.4" height="10.2" fill="#222"/>
<text x="243.5" y="431.6" font-family="DejaVu Sans,sans-serif" font-weight="bold" font-size="8.7" fill="#111">Diseño</text>
<text x="287" y="431.6" font-family="DejaVu Sans,sans-serif" font-size="8.6" fill="#222">Controles</text>
<text x="342.5" y="431.6" font-family="DejaVu Sans,sans-serif" font-size="8.75" fill="#222">Líneas de dimensiones</text>
</svg>

<div class="sbh" style="left:449.2px;top:424.3px;width:10.3px;height:10px"></div>
<div class="chev" style="left:453.3px;top:427px;transform:rotate(-45deg)"></div>
<div class="sbh" style="left:486px;top:424.3px;width:100.5px;height:10px;border-color:#9a948d"></div>
<div class="a" style="left:533.5px;top:427px;width:5px;height:4px;background:repeating-linear-gradient(90deg,#8d877f 0,#8d877f 1px,transparent 1px,transparent 2px)"></div>
<div class="sbh" style="left:613.4px;top:424.3px;width:10.8px;height:10px"></div>
<div class="chev" style="left:615.3px;top:427px;transform:rotate(135deg)"></div>
<div id="btb" class="a"></div>
<!--TB3S--><svg class="a" style="left:0;top:436px" width="640" height="30" viewBox="0 436 640 30">
<defs>
<linearGradient id="gGr" x1="0" y1="0" x2="1" y2="1"><stop offset="0" stop-color="#bdbdbd"/><stop offset="1" stop-color="#e9e9e9"/></linearGradient>
<radialGradient id="gSp" cx="0.4" cy="0.35" r="0.7"><stop offset="0" stop-color="#f4f4f4"/><stop offset="1" stop-color="#b4b4b4"/></radialGradient>
<linearGradient id="gBl" x1="0" y1="0" x2="0" y2="1"><stop offset="0" stop-color="#2c569c"/><stop offset="1" stop-color="#c4d4ea"/></linearGradient>
</defs>
<g fill="#bcaa94"><rect x="5.9" y="449" width="3" height="0.9"/><rect x="5.9" y="451.3" width="3" height="0.9"/><rect x="5.9" y="453.6" width="3" height="0.9"/></g>
<!-- select pressed -->
<rect x="14.3" y="438.4" width="23" height="25.2" rx="2.5" fill="#d9d1c9" stroke="#b9afa6" stroke-width="0.8"/>
<path d="M22.4 444.4V455.6L25 453.4L26.9 457.4L28.5 456.6L26.6 452.8H29.8z" fill="#fff" stroke="#111" stroke-width="1" stroke-linejoin="round"/>
<rect x="40" y="444.4" width="1" height="13.2" fill="#d3cec7"/>
<path d="M49.2 456.2L62 444" stroke="#222" stroke-width="1.1"/>
<path d="M72 450.4H82" stroke="#111" stroke-width="1.1"/><path d="M86.4 450.4L81.4 448.2V452.6z" fill="#111"/>
<rect x="96.8" y="445.4" width="13.8" height="10.4" fill="url(#gGr)" stroke="#a6a6a6" stroke-width="0.8"/>
<ellipse cx="127.8" cy="450.7" rx="8" ry="5.2" fill="url(#gGr)" stroke="#a6a6a6" stroke-width="0.8"/>
<!-- T -->
<rect x="144.9" y="444" width="14" height="14" rx="1" fill="#fff" stroke="#a8a8a4" stroke-width="1.2"/>
<rect x="145.4" y="457.8" width="13" height="0.8" fill="#8c8c88"/>
<text x="152" y="454.6" text-anchor="middle" font-family="Liberation Serif,serif" font-weight="bold" font-size="10.8" fill="#2a4c9e">T</text>
<rect x="166.4" y="444.4" width="1" height="13.2" fill="#d3cec7"/>
<!-- curve -->
<path d="M172.4 444.1C175.4 444.6 177.6 446.6 178.4 449.4C178.9 451.4 178.6 453.4 179.2 454.8L180.4 456.6H172.4z" fill="url(#gBl)"/>
<path d="M172.4 444.1C175.4 444.6 177.6 446.6 178.4 449.4C178.9 451.4 178.6 453.4 179.2 454.8C179.6 455.8 180.4 456.6 181.4 456.8" fill="none" stroke="#1a1a1a" stroke-width="0.9"/>
<path d="M180.8 456.8L181.6 452.8L187 443.6L190 445.4L184.4 454.6z" fill="#f0b830" stroke="#2a2210" stroke-width="0.7" stroke-linejoin="round"/>
<path d="M182.6 453.4L187.8 444.6" stroke="#fbe08c" stroke-width="0.9"/>
<path d="M187 443.6L187.6 442.6C188.4 441.6 191.2 443.2 190.6 444.4L190 445.4z" fill="#e04838" stroke="#2a2210" stroke-width="0.5"/>
<path d="M180.8 456.8L181.6 452.8L184.4 454.6z" fill="#e8d4b0" stroke="#2a2210" stroke-width="0.5"/>
<path d="M197.8 449.6h4.4l-2.2 2.4z" fill="#111"/>
<!-- connector -->
<path d="M213.4 445.2H217.2V455.5H220.8" fill="none" stroke="#6e6e6e" stroke-width="1"/>
<circle cx="212" cy="445.2" r="1.5" fill="#fff" stroke="#6e6e6e" stroke-width="0.8"/><circle cx="222.3" cy="455.5" r="1.5" fill="#fff" stroke="#6e6e6e" stroke-width="0.8"/>
<path d="M233.9 449.6h4.4l-2.2 2.4z" fill="#111"/>
<path d="M246.8 450.7H257" stroke="#111" stroke-width="1.1"/><path d="M261.2 450.7L256.2 448.5V452.9z" fill="#111"/>
<path d="M270.7 449.6h4.4l-2.2 2.4z" fill="#111"/>
<rect x="283.6" y="445.4" width="14.6" height="10.4" fill="url(#gGr)" stroke="#a6a6a6" stroke-width="0.8"/>
<path d="M307.1 449.6h4.4l-2.2 2.4z" fill="#111"/>
<circle cx="327.2" cy="450.7" r="7.9" fill="url(#gSp)" stroke="#6a6a6a" stroke-width="0.8"/>
<ellipse cx="326" cy="447.6" rx="4" ry="2.6" fill="#fff" opacity="0.6"/>
<path d="M343.6 449.6h4.4l-2.2 2.4z" fill="#111"/>
<path d="M355.2 450.8L361 445.8V448.4H366.4V445.8L372.2 450.8L366.4 455.8V453.2H361V455.8z" fill="#d6d6d6" stroke="#ababab" stroke-width="0.8" stroke-linejoin="round"/>
<path d="M380.3 449.6h4.4l-2.2 2.4z" fill="#111"/>
<!-- flowchart -->
<rect x="392.8" y="443.8" width="15.4" height="14" fill="#e9e9e9" stroke="#ababab" stroke-width="0.8"/>
<path d="M392.8 447.2H408.2M397.2 447.2V457.8" stroke="#bdbdbd" stroke-width="0.8"/>
<path d="M416.7 449.6h4.4l-2.2 2.4z" fill="#111"/>
<!-- callout -->
<path d="M430.4 443.8H443.6Q445.4 443.8 445.4 445.6V452.4Q445.4 454.2 443.6 454.2H435L429.8 458.2L432 454.2H430.4Q428.6 454.2 428.6 452.4V445.6Q428.6 443.8 430.4 443.8z" fill="url(#gGr)" stroke="#9c9c9c" stroke-width="0.8" stroke-linejoin="round"/>
<path d="M453.2 449.6h4.4l-2.2 2.4z" fill="#111"/>
<!-- star -->
<path d="M473 443.2L475.1 448.9L481.2 449.1L476.4 452.9L478.1 458.7L473 455.3L467.9 458.7L469.6 452.9L464.8 449.1L470.9 448.9z" fill="#dedede" stroke="#2e2e2e" stroke-width="0.9" stroke-linejoin="miter"/>
<path d="M490 449.6h4.4l-2.2 2.4z" fill="#111"/>
<rect x="501" y="444.4" width="1" height="13.2" fill="#d3cec7"/>
<!-- points -->
<path d="M509.9 444.4L517.8 442.9L522.9 448.6L520.5 457.7L508.6 456.3L513.1 452.1z" fill="none" stroke="#111" stroke-width="1.1"/>
<g fill="#111"><rect x="508.9" y="443.4" width="2" height="2"/><rect x="516.8" y="441.9" width="2" height="2"/><rect x="521.9" y="447.6" width="2" height="2"/><rect x="519.5" y="456.7" width="2" height="2"/><rect x="507.6" y="455.3" width="2" height="2"/><rect x="512.1" y="451.1" width="2" height="2"/></g>
<!-- glue -->
<path d="M535.6 455L536.5 450.7L540 454.5z" fill="#e4e6e8" stroke="#9a9ea2" stroke-width="0.4"/>
<path d="M536.1 450.2L537.4 449L541.7 453.7L540.4 454.9z" fill="#dc1c1c"/>
<path d="M537.4 449L541.8 445L546.2 449.7L541.7 453.7z" fill="#f0d020"/>
<path d="M538.6 447.9L540.6 446.1L545 450.8L543 452.6z" fill="#f8ec7c" opacity="0.8"/>
<path d="M541.3 444.4L543.5 442.4C544.8 441.2 550.2 447 548.9 448.2L546.7 450.2z" fill="#ecc818" stroke="#c4a00c" stroke-width="0.4"/>
<path d="M535.5 455.6C537 457 537.2 459 535.6 459.2C533.8 459.2 534 457 535.5 455.6z" fill="#2c5cc0"/>
<rect x="555" y="444.4" width="1" height="13.2" fill="#d3cec7"/>
<!-- fontwork -->
<rect x="563.6" y="443" width="14" height="14.4" fill="#fff" stroke="#a6a6a6" stroke-width="0.8"/>
<text x="570.8" y="455" text-anchor="middle" font-family="Liberation Serif,serif" font-style="italic" font-size="13" fill="#4a7ccc">A</text>
<!-- gallery -->
<rect x="587.6" y="443" width="14" height="14.4" fill="#fff" stroke="#a6a6a6" stroke-width="0.8"/>
<rect x="589" y="447.6" width="7.2" height="7.2" fill="#e02424"/>
<path d="M594.6 456L596 452.4H599L600.4 456z" fill="#2c5cc0"/>
<circle cx="597.5" cy="448.8" r="3.3" fill="#f2d428" stroke="#c8a408" stroke-width="0.5"/>
<!-- overflow -->
<text x="625.2" y="446.5" font-family="DejaVu Sans,sans-serif" font-weight="bold" font-size="11.5" fill="#111" stroke="#111" stroke-width="0.3">»</text>
<rect x="625.3" y="447" width="7.3" height="16.7" fill="url(#gHd)"/>
<path d="M626.7 458.1h4l-2 2.4z" fill="#111"/>
</svg>
<!--TB3E-->
<div id="status" class="a"></div>
<div class="sf" style="left:7px;width:175px"><span>Marco de texto 'Desayuno...' marcado</span></div>
<div class="sf" style="left:184px;width:159px"><span style="left:20px">0,25 / 6,06</span><span style="left:98.5px">18,81 x 15,95</span></div>
<div class="sf" style="left:347.5px;width:32px"><span style="left:5px">36%</span></div>
<div class="sf" style="left:382.5px;width:17.5px"><span style="left:5.5px">*</span></div>
<div class="sf" style="left:402.5px;width:18.5px"></div>
<div class="sf" style="left:423.5px;width:97px"><span style="left:2.7px">Página 1 / 1 (Diseño)</span></div>
<div class="sf" style="left:523.8px;width:108.5px"><span style="left:2.7px">Predeterminado</span></div>

<svg class="a" style="left:186px;top:468px" width="100" height="14" viewBox="186 468 100 14">
<path d="M192.2 470.2V474.6M190.2 472.4H194.4" stroke="#2a4cc0" stroke-width="0.9"/>
<rect x="193.4" y="473.4" width="6.2" height="4" fill="none" stroke="#333" stroke-width="0.8"/>
<rect x="270.4" y="471.6" width="6" height="5.6" fill="none" stroke="#333" stroke-width="0.8" stroke-dasharray="1.4 0.8"/>
<g fill="#222"><rect x="268.2" y="471.8" width="1.1" height="1.3"/><rect x="268.2" y="475.4" width="1.1" height="1.3"/><rect x="269.8" y="470.6" width="1.5" height="1.5"/><rect x="275.6" y="470.6" width="1.5" height="1.5"/><rect x="269.8" y="476.4" width="1.5" height="1.5"/><rect x="275.6" y="476.4" width="1.5" height="1.5"/></g>
</svg>
<div id="wl" class="a"></div><div id="wr" class="a"></div><div id="wb" class="a"></div><div id="wbb" class="a"></div>
</body></html>
